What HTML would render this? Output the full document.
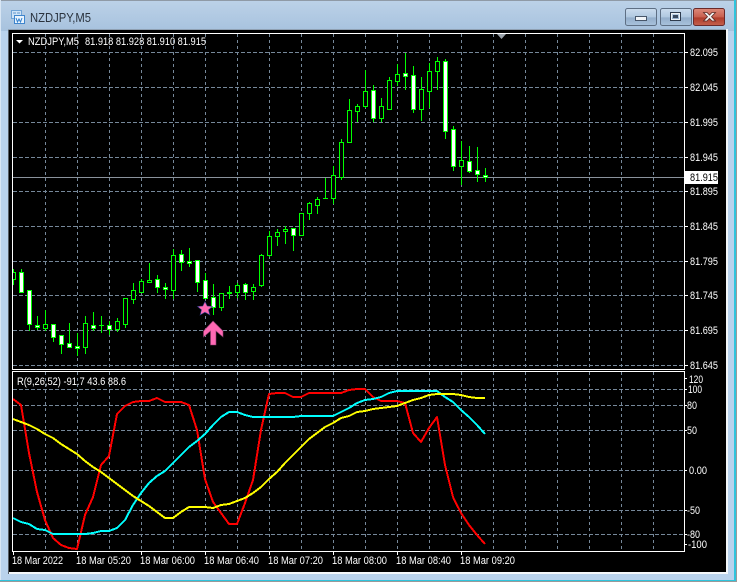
<!DOCTYPE html>
<html><head><meta charset="utf-8"><title>NZDJPY,M5</title>
<style>
html,body{margin:0;padding:0;width:737px;height:582px;overflow:hidden;background:#b7d0ea}
svg{display:block;position:absolute;left:0;top:0}
text{font-family:"Liberation Sans",sans-serif;font-size:11px;fill:#fff}
</style></head><body>
<svg width="737" height="582" viewBox="0 0 737 582" xmlns="http://www.w3.org/2000/svg">
<defs>
<linearGradient id="t" x1="0" y1="0" x2="0" y2="1"><stop offset="0" stop-color="#bcd2e8"/><stop offset="1" stop-color="#a7c2de"/></linearGradient>
<linearGradient id="b" x1="0" y1="0" x2="0" y2="1"><stop offset="0" stop-color="#cbdcee"/><stop offset=".5" stop-color="#b0c8e0"/><stop offset=".55" stop-color="#94aecb"/><stop offset="1" stop-color="#a9c3dc"/></linearGradient>
<linearGradient id="r" x1="0" y1="0" x2="0" y2="1"><stop offset="0" stop-color="#dd8a7a"/><stop offset=".5" stop-color="#c9604f"/><stop offset=".55" stop-color="#b03c2b"/><stop offset="1" stop-color="#c4604c"/></linearGradient>
<clipPath id="mc"><rect x="13" y="34" width="671" height="335"/></clipPath>
<clipPath id="sc"><rect x="13" y="372" width="671" height="179"/></clipPath>
</defs>
<!-- window frame -->
<rect width="737" height="582" fill="#b9d2ec"/>
<rect width="737" height="31" fill="url(#t)"/>
<rect x="0" y="0" width="737" height="1" fill="#8f9aa6"/>
<rect x="0" y="0" width="1" height="582" fill="#d8e6f4"/>
<rect x="734" y="0" width="2" height="581" fill="#2fc4dc"/>
<rect x="0" y="580" width="736" height="1" fill="#2fc4dc"/>
<rect x="736" y="0" width="1" height="582" fill="#9a9a9a"/>
<rect x="0" y="581" width="737" height="1" fill="#9a9a9a"/>
<rect x="8" y="29" width="720" height="545" fill="#f4f7fa"/>
<rect x="8" y="29" width="1" height="545" fill="#555c64"/>
<rect x="8" y="29" width="718" height="1" fill="#8fa0b2"/>
<rect x="9" y="30" width="717" height="542" fill="#000"/>
<!-- title icon -->
<g shape-rendering="crispEdges">
<rect x="11.5" y="10.500" width="10" height="8" fill="#cfe3f6" stroke="#6fa3d6"/>
<rect x="14.500" y="15.500" width="10" height="8" fill="#eaf4fd" stroke="#3f85cc"/>
<path d="M13 13h3M17 13h3" stroke="#5f97cf"/>
</g>
<path d="M16 18l1.500 4 1.500-3 1.500 3 1.500-4" fill="none" stroke="#2f7fce"/>
<text x="30" y="22" style="font-size:13px;fill:#2a333e" textLength="61" lengthAdjust="spacingAndGlyphs">NZDJPY,M5</text>
<!-- buttons -->
<rect x="625.500" y="8.500" width="31" height="17" rx="2" fill="url(#b)" stroke="#5e6f84"/>
<rect x="660.500" y="8.500" width="31" height="17" rx="2" fill="url(#b)" stroke="#5e6f84"/>
<rect x="693.500" y="8.500" width="31" height="17" rx="2" fill="url(#r)" stroke="#6a2a2a"/>
<rect x="635.500" y="16.500" width="11" height="4" fill="#f0f4f8" stroke="#47566a"/>
<rect x="670.500" y="12.500" width="10" height="8" fill="none" stroke="#2f3c4e" stroke-width="1"/>
<rect x="671.500" y="13.500" width="8" height="6" fill="none" stroke="#eef3f8"/>
<rect x="673" y="15" width="5" height="3" fill="#3a4a60"/>
<path d="M704 12.500l3 0 2.500 2.500 2.500-2.500h3.500l-4 4.200 4 4.300h-3.500l-2.500-2.500-2.500 2.500h-3.500l4-4.300-4-4.200z" fill="#f2f2f2" stroke="#5a2a26" stroke-width=".8"/>

<!-- frames -->
<g shape-rendering="crispEdges">
<rect x="12.500" y="33.500" width="672" height="336" fill="#000" stroke="#fff"/>
<rect x="12.500" y="371.500" width="672" height="180" fill="#000" stroke="#fff"/>
<!-- main grid -->
<g clip-path="url(#mc)" stroke="#76889a" fill="none">
<path stroke-dasharray="4 2" d="M13 52.500H684M13 87.500H684M13 122.500H684M13 157.500H684M13 191.500H684M13 226.500H684M13 261.500H684M13 295.500H684M13 330.500H684M13 365.500H684"/>
<path stroke-dasharray="3 3" d="M45.500 34V369M77.500 34V369M109.500 34V369M141.500 34V369M173.500 34V369M205.500 34V369M237.500 34V369M269.500 34V369M301.500 34V369M333.500 34V369M365.500 34V369M397.500 34V369M429.500 34V369M461.500 34V369M493.500 34V369M525.500 34V369M557.500 34V369M589.500 34V369M621.500 34V369M653.500 34V369"/>
</g>
<g clip-path="url(#sc)" stroke="#76889a" fill="none">
<path stroke-dasharray="4 2" d="M13 389.500H684M13 405.500H684M13 430.500H684M13 470.500H684M13 510.500H684M13 534.500H684"/>
<path stroke-dasharray="3 3" d="M45.500 372V551M77.500 372V551M109.500 372V551M141.500 372V551M173.500 372V551M205.500 372V551M237.500 372V551M269.500 372V551M301.500 372V551M333.500 372V551M365.500 372V551M397.500 372V551M429.500 372V551M461.500 372V551M493.500 372V551M525.500 372V551M557.500 372V551M589.500 372V551M621.500 372V551M653.500 372V551"/>
</g>
<!-- ticks -->
<path stroke="#fff" d="M685 52.500h3M685 87.500h3M685 122.500h3M685 157.500h3M685 191.500h3M685 226.500h3M685 261.500h3M685 295.500h3M685 330.500h3M685 365.500h3M685 378.500h2M685 389.500h2M685 405.500h2M685 430.500h2M685 470.500h2M685 510.500h2M685 534.500h2M685 544.500h2M13.500 552v3M77.500 552v3M141.500 552v3M205.500 552v3M269.500 552v3M333.500 552v3M397.500 552v3M461.500 552v3"/>
<!-- price line -->
<path stroke="#8a929c" d="M13 177.500H684"/>
<!-- candles -->
<g clip-path="url(#mc)">
<path stroke="#00ff00" fill="none" d="M13.500 269V285M21.500 269V292M29.500 290V331M37.500 316V330M45.500 310V331M53.500 324V342M61.500 335V354M69.500 323V347M77.500 333V356M85.500 316V354M93.500 312V331M101.500 316V333M109.500 321V335M117.500 318V332M125.500 298V328M133.500 283V304M141.500 279V293M149.500 263V283M157.500 275V293M165.500 283V299M173.500 249V299M181.500 250V271M189.500 248V267M197.500 260V292M205.500 273V298M213.500 284V315M221.500 293V311M229.500 286V299M237.500 283V298M245.500 283V300M253.500 284V300M261.500 254V287M269.500 231V257M277.500 229V246M285.500 226V244M293.500 228V251M301.500 213V235M309.500 202V220M317.500 197V214M325.500 178V198M333.500 166V204M341.500 139V180M349.500 99V143M357.500 104V122M365.500 70V108M373.500 85V122M381.500 98V122M389.500 77V109M397.500 64V86M405.500 53V90M413.500 66V113M421.500 77V121M429.500 63V108M437.500 57V90M445.500 59V139M453.500 126V171M461.500 141V185M469.500 146V173M477.500 147V182M485.500 168V182M99 325.500h5M323 198.500h5"/>
<path stroke="#00ff00" fill="#000" d="M11.500 272.500h4v7h-4zM43.500 324.500h4v4h-4zM83.500 323.500h4v24h-4zM115.500 321.500h4v8h-4zM123.500 298.500h4v26h-4zM131.500 290.500h4v9h-4zM139.500 281.500h4v11h-4zM147.500 280.500h4v2h-4zM171.500 255.500h4v35h-4zM219.500 293.500h4v14h-4zM235.500 285.500h4v7h-4zM251.500 287.500h4v4h-4zM259.500 255.500h4v30h-4zM267.500 236.500h4v19h-4zM275.500 232.500h4v4h-4zM283.500 229.500h4v2h-4zM299.500 213.500h4v22h-4zM307.500 203.500h4v10h-4zM315.500 199.500h4v6h-4zM331.500 175.500h4v23h-4zM339.500 142.500h4v35h-4zM347.500 110.500h4v32h-4zM355.500 106.500h4v5h-4zM363.500 91.500h4v15h-4zM379.500 106.500h4v12h-4zM387.500 80.500h4v29h-4zM395.500 74.500h4v7h-4zM419.500 89.500h4v20h-4zM427.500 71.500h4v20h-4zM435.500 61.500h4v10h-4zM459.500 160.500h4v6h-4z"/>
<path stroke="#00ff00" fill="#fff" d="M19.500 272.500h4v20h-4zM27.500 290.500h4v34h-4zM35.500 325.500h4v2h-4zM51.500 324.500h4v13h-4zM59.500 335.500h4v9h-4zM67.500 343.500h4v4h-4zM75.500 346.500h4v2h-4zM91.500 325.500h4v3h-4zM107.500 325.500h4v4h-4zM155.500 279.500h4v8h-4zM163.500 287.500h4v2h-4zM179.500 254.500h4v8h-4zM187.500 261.500h4v2h-4zM195.500 260.500h4v22h-4zM203.500 280.500h4v18h-4zM211.500 297.500h4v10h-4zM227.500 292.500h4v1h-4zM243.500 284.500h4v8h-4zM291.500 228.500h4v7h-4zM371.500 90.500h4v28h-4zM403.500 73.500h4v3h-4zM411.500 75.500h4v34h-4zM443.500 61.500h4v70h-4zM451.500 129.500h4v37h-4zM467.500 161.500h4v10h-4zM475.500 170.500h4v4h-4zM483.500 175.500h4v2h-4z"/>
</g>
<!-- price tag -->
<rect x="685" y="171" width="33" height="13" fill="#fff"/>
</g>
<!-- top triangle and header triangle -->
<path d="M497 34h9l-4.500 5z" fill="#9aa2aa"/>
<path d="M16 40h7l-3.500 3.500z" fill="#fff"/>
<!-- star / arrow -->
<path d="M205 301.500l2.200 4.500 5.300.5-4 3.300 1.400 5.200-4.900-2.800-4.900 2.800 1.400-5.200-4-3.300 5.300-.5z" fill="#ff69b4" stroke="#2a3a8a" stroke-width=".6"/>
<path d="M213 321L223 331V337L216 331V345H210.500V331L203.500 337V331Z" fill="#ff69b4" stroke="#8a3a6a" stroke-width=".6"/>
<!-- indicators -->
<g clip-path="url(#sc)" fill="none" stroke-width="2" stroke-linejoin="round" shape-rendering="crispEdges">
<polyline stroke="#ff0000" points="13,399 21,405 29,453 37,492 45,520 53,538 61,545 69,548 77,549 85,515 93,497 101,465 109,456 117,414 125,406 133,402 141,401 149,401 157,398 165,402 173,402 181,402 189,405 197,430 205,479 213,502 221,513 229,524 237,524 245,503 253,480 261,430 269,394 277,393 285,393 293,397 301,397 309,393 317,393 325,393 333,393 341,393 349,390 357,389 365,389 373,397 381,401 389,401 397,401 405,403 413,433 421,442 429,428 437,417 445,465 453,497 461,513 469,525 477,535 485,544"/>
<polyline stroke="#00ffff" points="13,518 21,522 29,524 37,529 45,530 53,534 61,534 69,534 77,534 85,534 93,533 101,531 109,531 117,528 125,520 133,505 141,493 149,483 157,476 165,471 173,463 181,455 189,447 197,441 205,434 213,425 221,417 229,412 237,412 245,415 253,417 261,417 269,417 277,417 285,417 293,417 301,416 309,416 317,416 325,416 333,416 341,412 349,408 357,403 365,400 373,399 381,397 389,393 397,391 405,391 413,391 421,391 429,391 437,391 445,397 453,402 461,410 469,417 477,425 485,434"/>
<polyline stroke="#ffff00" points="13,419 21,422 29,425 37,429 45,434 53,438 61,444 69,449 77,454 85,461 93,467 101,472 109,478 117,484 125,490 133,496 141,501 149,506 157,512 165,518 173,518 181,512 189,507 197,507 205,507 213,508 221,505 229,504 237,501 245,498 253,493 261,487 269,479 277,472 285,463 293,455 301,447 309,439 317,433 325,427 333,423 341,418 349,416 357,412 365,411 373,409 381,408 389,407 397,406 405,403 413,400 421,398 429,395 437,394 445,394 453,394 461,395 469,397 477,398 485,398"/>
</g>
<!-- text -->
<text x="28" y="45" textLength="51" lengthAdjust="spacingAndGlyphs">NZDJPY,M5</text>
<text x="85" y="45" textLength="121" lengthAdjust="spacingAndGlyphs">81.918 81.928 81.910 81.915</text>
<text x="17" y="385" textLength="109" lengthAdjust="spacingAndGlyphs">R(9,26,52) -91.7 43.6 88.6</text>
<g>
<text x="690" y="56" textLength="28" lengthAdjust="spacingAndGlyphs">82.095</text>
<text x="690" y="91" textLength="28" lengthAdjust="spacingAndGlyphs">82.045</text>
<text x="690" y="126" textLength="28" lengthAdjust="spacingAndGlyphs">81.995</text>
<text x="690" y="161" textLength="28" lengthAdjust="spacingAndGlyphs">81.945</text>
<text x="690" y="181" textLength="28" lengthAdjust="spacingAndGlyphs" style="fill:#000">81.915</text>
<text x="690" y="195" textLength="28" lengthAdjust="spacingAndGlyphs">81.895</text>
<text x="690" y="230" textLength="28" lengthAdjust="spacingAndGlyphs">81.845</text>
<text x="690" y="265" textLength="28" lengthAdjust="spacingAndGlyphs">81.795</text>
<text x="690" y="299" textLength="28" lengthAdjust="spacingAndGlyphs">81.745</text>
<text x="690" y="334" textLength="28" lengthAdjust="spacingAndGlyphs">81.695</text>
<text x="690" y="369" textLength="28" lengthAdjust="spacingAndGlyphs">81.645</text>
<text x="689" y="383" textLength="14" lengthAdjust="spacingAndGlyphs">120</text>
<text x="688" y="393" textLength="14" lengthAdjust="spacingAndGlyphs">100</text>
<text x="687" y="409" textLength="10" lengthAdjust="spacingAndGlyphs">80</text>
<text x="687" y="434" textLength="10" lengthAdjust="spacingAndGlyphs">50</text>
<text x="689" y="474" textLength="18" lengthAdjust="spacingAndGlyphs">0.00</text>
<text x="687" y="514" textLength="13" lengthAdjust="spacingAndGlyphs">-50</text>
<text x="687" y="538" textLength="13" lengthAdjust="spacingAndGlyphs">-80</text>
<text x="688" y="548" textLength="19" lengthAdjust="spacingAndGlyphs">-100</text>
</g>
<g>
<text x="12" y="564" textLength="51" lengthAdjust="spacingAndGlyphs">18 Mar 2022</text>
<text x="76" y="564" textLength="55" lengthAdjust="spacingAndGlyphs">18 Mar 05:20</text>
<text x="140" y="564" textLength="55" lengthAdjust="spacingAndGlyphs">18 Mar 06:00</text>
<text x="204" y="564" textLength="55" lengthAdjust="spacingAndGlyphs">18 Mar 06:40</text>
<text x="268" y="564" textLength="55" lengthAdjust="spacingAndGlyphs">18 Mar 07:20</text>
<text x="332" y="564" textLength="55" lengthAdjust="spacingAndGlyphs">18 Mar 08:00</text>
<text x="396" y="564" textLength="55" lengthAdjust="spacingAndGlyphs">18 Mar 08:40</text>
<text x="460" y="564" textLength="55" lengthAdjust="spacingAndGlyphs">18 Mar 09:20</text>
</g>
</svg>
</body></html>
